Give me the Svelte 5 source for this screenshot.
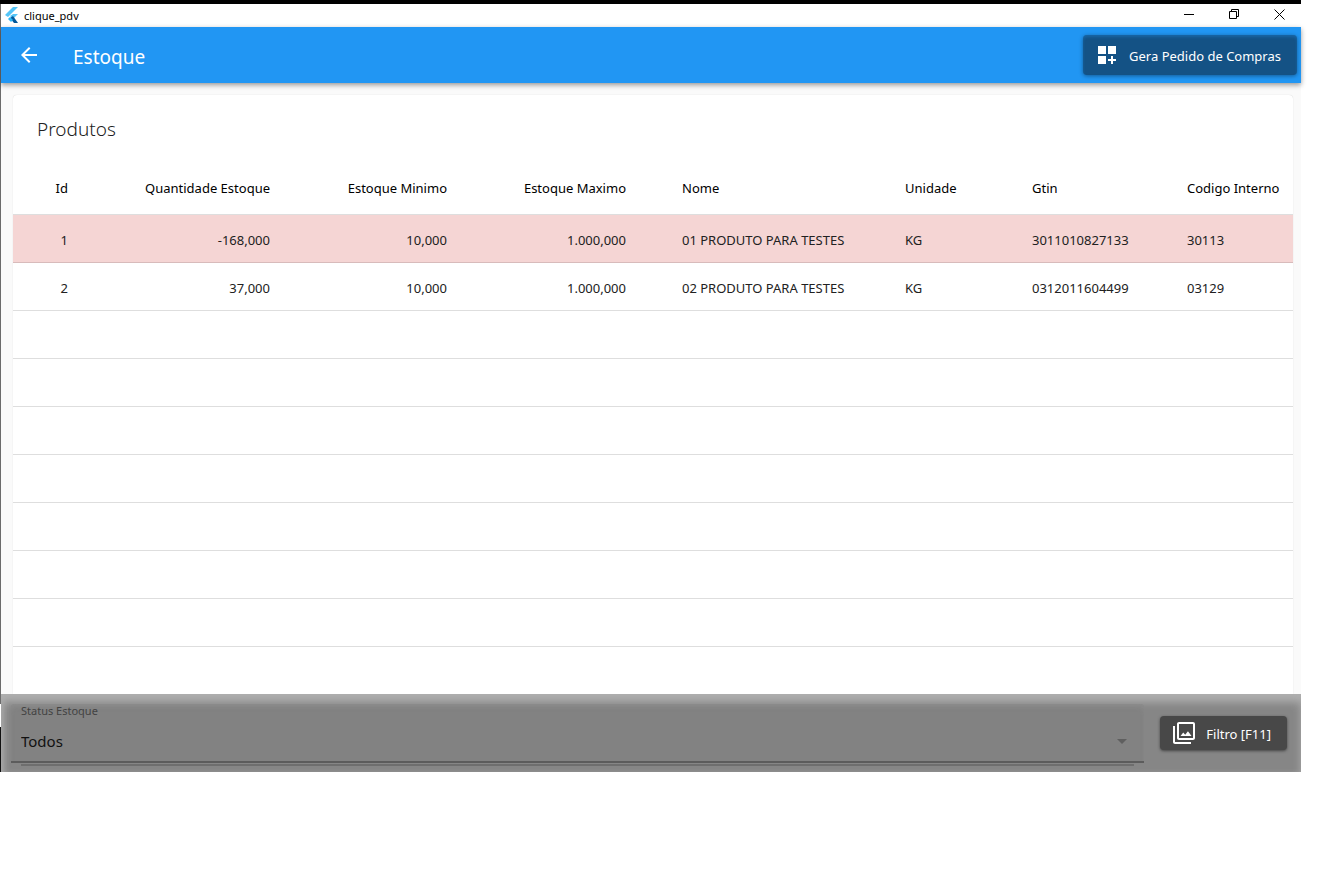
<script lang="ts">
  type Align = "right" | "left";

  const columns: { key: string; label: string; width: number; align: Align }[] = [
    { key: "id", label: "Id", width: 83, align: "right" },
    { key: "quantidade", label: "Quantidade Estoque", width: 202, align: "right" },
    { key: "minimo", label: "Estoque Minimo", width: 177, align: "right" },
    { key: "maximo", label: "Estoque Maximo", width: 179, align: "right" },
    { key: "nome", label: "Nome", width: 223, align: "left" },
    { key: "unidade", label: "Unidade", width: 127, align: "left" },
    { key: "gtin", label: "Gtin", width: 155, align: "left" },
    { key: "codigo", label: "Codigo Interno", width: 134, align: "left" },
  ];

  const produtos: Record<string, string>[] = [
    {
      id: "1",
      quantidade: "-168,000",
      minimo: "10,000",
      maximo: "1.000,000",
      nome: "01 PRODUTO PARA TESTES",
      unidade: "KG",
      gtin: "3011010827133",
      codigo: "30113",
    },
    {
      id: "2",
      quantidade: "37,000",
      minimo: "10,000",
      maximo: "1.000,000",
      nome: "02 PRODUTO PARA TESTES",
      unidade: "KG",
      gtin: "0312011604499",
      codigo: "03129",
    },
  ];

  // the page always shows ten rows, the rest stay blank
  const rows = [...produtos, ...Array(10 - produtos.length).fill({})];

  let status = $state("Todos");
</script>

<div class="window">
  <div class="titlebar">
    <svg class="logo" width="14" height="17" viewBox="0 0 14 17">
      <path d="M8 0h5L3 10 0 8z" fill="#54c5f8" />
      <path d="M8 7h5l-5 5-3-3z" fill="#54c5f8" />
      <path d="M5 11l3-2 5 7H9z" fill="#01579b" />
      <path d="M5 10l3 3-2 2-3-3z" fill="#29b6f6" />
    </svg>
    <span class="app-name">clique_pdv</span>
    <div class="window-buttons">
      <button aria-label="Minimizar">
        <svg width="11" height="11" viewBox="0 0 11 11"><path d="M0 5.5h10" /></svg>
      </button>
      <button aria-label="Restaurar">
        <svg width="11" height="11" viewBox="0 0 11 11"><path d="M.5 2.5h7v7h-7zM2.5 2.5v-2h7v7h-2" /></svg>
      </button>
      <button aria-label="Fechar">
        <svg width="11" height="11" viewBox="0 0 11 11"><path d="M.5.5l10 10M10.5.5l-10 10" /></svg>
      </button>
    </div>
  </div>

  <header class="appbar">
    <button class="back" aria-label="Voltar">
      <svg width="24" height="24" viewBox="0 0 24 24">
        <path d="M20 11H7.83l5.59-5.59L12 4l-8 8 8 8 1.41-1.41L7.83 13H20v-2z" />
      </svg>
    </button>
    <h1>Estoque</h1>
    <button class="action pedido">
      <svg width="24" height="24" viewBox="0 0 24 24">
        <path d="M3 3h8v8H3zM13 3h8v8h-8zM3 13h8v8H3zM18 13h-2v3h-3v2h3v3h2v-3h3v-2h-3z" />
      </svg>
      <span>Gera Pedido de Compras</span>
    </button>
  </header>

  <main>
    <section class="card">
      <h2>Produtos</h2>
      <table>
        <colgroup>
          {#each columns as column}
            <col style="width: {column.width}px" />
          {/each}
        </colgroup>
        <thead>
          <tr>
            {#each columns as column}
              <th class={column.align}>{column.label}</th>
            {/each}
          </tr>
        </thead>
        <tbody>
          {#each rows as row}
            <tr class:negative={row.quantidade?.startsWith("-")}>
              {#each columns as column}
                <td class={column.align}>{row[column.key] ?? ""}</td>
              {/each}
            </tr>
          {/each}
        </tbody>
      </table>
    </section>
  </main>

  <footer>
    <div class="filter">
      <div class="field">
        <label for="status">Status Estoque</label>
        <select id="status" bind:value={status}>
          <option>Todos</option>
        </select>
        <svg class="arrow" width="10" height="5" viewBox="0 0 10 5"><path d="M0 0h10L5 5z" /></svg>
      </div>
      <div class="underline"></div>
    </div>
    <button class="action filtro">
      <svg width="24" height="24" viewBox="0 0 24 24">
        <path d="M15.96 10.29l-2.75 3.54-1.96-2.36L8.5 15h11l-3.54-4.71zM3 5H1v16c0 1.1.9 2 2 2h16v-2H3V5zm18-4H7c-1.1 0-2 .9-2 2v14c0 1.1.9 2 2 2h14c1.1 0 2-.9 2-2V3c0-1.1-.9-2-2-2zm0 16H7V3h14v14z" />
      </svg>
      <span>Filtro [F11]</span>
    </button>
  </footer>
</div>

<style>
  :global(body) {
    margin: 0;
    background: #fff;
  }

  .window {
    box-sizing: border-box;
    margin-right: 19px;
    padding-left: 1px;
    border-top: 4px solid #000;
    background: linear-gradient(#6b6b6b 700px, #fff 700px, #fff 723px, #111 723px);
    font-family: "Noto Sans", "Open Sans", sans-serif;
    font-size: 13px;
    color: #212121;
  }

  button {
    padding: 0;
    border: none;
    background: none;
    font: inherit;
  }

  .titlebar {
    display: flex;
    align-items: center;
    height: 23px;
    padding-left: 4px;
    background: #fff;
    color: #000;
  }

  .logo {
    margin-right: 5px;
  }

  .app-name {
    font-size: 11px;
  }

  .window-buttons {
    display: flex;
    align-self: flex-start;
    margin-left: auto;
  }

  .window-buttons button {
    display: flex;
    align-items: center;
    justify-content: center;
    width: 45px;
    height: 21px;
    padding-left: 2px;
  }

  .window-buttons path {
    fill: none;
    stroke: #000;
  }

  .appbar {
    position: relative;
    display: flex;
    align-items: center;
    height: 56px;
    padding: 0 4px 0 16px;
    background: #2196f3;
    box-shadow: 0 2px 5px rgba(0, 0, 0, 0.4);
    color: #fff;
  }

  .back {
    display: flex;
  }

  .back svg,
  .action svg {
    fill: #fff;
  }

  h1 {
    margin: 0 0 0 32px;
    padding-top: 4px;
    font-size: 19px;
    font-weight: 400;
  }

  .action {
    display: flex;
    align-items: center;
    gap: 10px;
    padding: 0 16px 0 12px;
    border-radius: 4px;
    color: #fff;
    white-space: nowrap;
  }

  .action span {
    padding-top: 2px;
  }

  .pedido {
    height: 40px;
    margin-left: auto;
    background: #145285;
    box-shadow: 0 1px 4px rgba(0, 0, 0, 0.4), inset 0 2px 3px rgba(33, 150, 243, 0.3);
  }

  main {
    padding: 12px 8px 0 12px;
    background: #fafafa;
  }

  .card {
    border-radius: 4px 4px 0 0;
    background: #fff;
    box-shadow: 0 0 1px rgba(0, 0, 0, 0.2);
  }

  h2 {
    box-sizing: border-box;
    height: 64px;
    margin: 0;
    padding: 4px 24px 0;
    font-size: 19px;
    font-weight: 300;
    line-height: 60px;
  }

  table {
    width: 100%;
    border-collapse: separate;
    border-spacing: 0;
    table-layout: fixed;
  }

  th,
  td {
    box-sizing: border-box;
    height: 48px;
    padding: 2px 28px 0;
    border-bottom: 1px solid #dedede;
    font-weight: 400;
    white-space: nowrap;
  }

  th {
    height: 56px;
    color: #000;
  }

  tr:last-child td {
    height: 47px;
    border-bottom: none;
  }

  .right {
    text-align: right;
  }

  .left {
    text-align: left;
  }

  .negative td {
    background: #f5d5d4;
    border-bottom-color: #d8bbbb;
  }

  footer {
    position: relative;
    display: flex;
    align-items: flex-start;
    gap: 16px;
    padding: 10px 14px 5px 10px;
    background: #868686;
    box-shadow: inset 0 8px 8px #afafaf, inset 5px 0 6px -2px #a0a0a0;
  }

  .filter {
    flex: 1;
  }

  .field {
    position: relative;
    display: flex;
    flex-direction: column;
    border-bottom: 2px solid #5c5c5c;
    border-radius: 4px 4px 0 0;
    background: #828282;
    box-shadow: inset 0 4px 5px -2px #8e8e8e;
  }

  label {
    padding: 0 10px;
    font-size: 11px;
    line-height: 13px;
    color: #434343;
  }

  select {
    appearance: none;
    height: 44px;
    padding: 4px 10px 0;
    border: none;
    background: none;
    font-family: inherit;
    font-size: 15px;
    color: #111;
  }

  .arrow {
    position: absolute;
    right: 17px;
    bottom: 17px;
    fill: #5f5f5f;
    pointer-events: none;
  }

  .underline {
    height: 2px;
    margin: 1px 10px;
    background: #6e6e6e;
  }

  .filtro {
    height: 34px;
    margin-top: 12px;
    background: #484848;
    box-shadow: 0 1px 3px rgba(0, 0, 0, 0.5);
  }
</style>
